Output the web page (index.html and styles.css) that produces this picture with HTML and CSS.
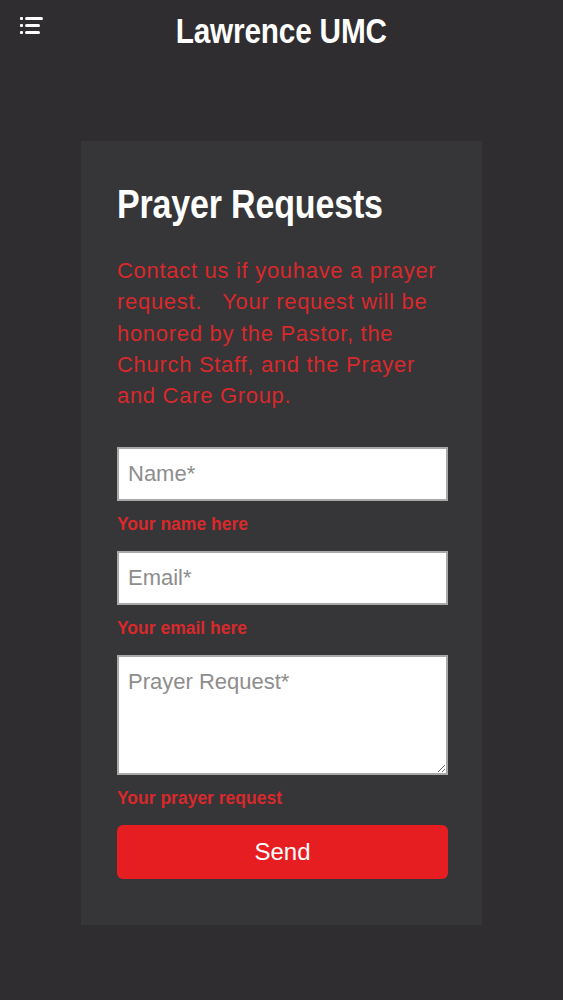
FILE: index.html
```html
<!DOCTYPE html>
<html lang="en">
<head>
    <meta charset="UTF-8">
    <meta name="viewport" content="width=device-width, initial-scale=1.0">
    <title>Lawrence UMC - Prayer Requests</title>
    <link rel="stylesheet" href="styles.css">
</head>
<body>
    <header class="topbar">
        <button class="menu-btn" aria-label="Menu">
            <svg width="24" height="20" viewBox="0 0 24 20">
                <rect x="0" y="1" width="3" height="3" rx="1" fill="#fff"/>
                <rect x="0" y="8" width="3" height="3" rx="1" fill="#fff"/>
                <rect x="0" y="15" width="3" height="3" rx="1" fill="#fff"/>
                <rect x="5" y="1" width="18" height="3" rx="1.5" fill="#fff"/>
                <rect x="5" y="8" width="15" height="3" rx="1.5" fill="#fff"/>
                <rect x="5" y="15" width="15" height="3" rx="1.5" fill="#fff"/>
            </svg>
        </button>
        <h1 class="site-title">Lawrence UMC</h1>
    </header>

    <main class="card">
        <h2 class="card-title">Prayer Requests</h2>
        <p class="intro">Contact us if youhave a prayer request.&nbsp;&nbsp; Your request will be honored by the Pastor, the Church Staff, and the Prayer and Care Group.</p>

        <form class="prayer-form">
            <div class="field">
                <input type="text" placeholder="Name*">
                <span class="hint">Your name here</span>
            </div>
            <div class="field">
                <input type="email" placeholder="Email*">
                <span class="hint">Your email here</span>
            </div>
            <div class="field">
                <textarea placeholder="Prayer Request*"></textarea>
                <span class="hint">Your prayer request</span>
            </div>
            <button type="submit" class="send-btn">Send</button>
        </form>
    </main>
</body>
</html>
```

FILE: styles.css
```css
/* Page */
body {
    margin: 0;
    background-color: #2f2d30;
    font-family: "Liberation Sans", Arial, sans-serif;
    color: #fff;
}

/* Top bar */
.topbar {
    position: relative;
    height: 62px;
    display: flex;
    justify-content: center;
    align-items: center;
}

.menu-btn {
    position: absolute;
    left: 20px;
    top: 16px;
    padding: 0;
    background: none;
    border: none;
    line-height: 0;
}

/* condensed bold look: no narrow face installed, so squeeze the bold */
.site-title {
    margin: 0;
    font-weight: bold;
    font-size: 35px;
    line-height: 40px;
    letter-spacing: -0.2px;
    transform: scaleX(0.85);
}

/* Card */
.card {
    width: 401px;
    margin: 79px auto 0;
    background-color: #363537;
    padding: 40px 34px 46px 36px;
    box-sizing: border-box;
}

.card-title {
    margin: 0 0 28px;
    font-weight: bold;
    font-size: 40px;
    line-height: 46px;
    letter-spacing: -0.2px;
    transform: scaleX(0.85);
    transform-origin: left center;
    white-space: nowrap;
}

.intro {
    margin: 0 0 36px;
    color: #d8292c;
    font-size: 22px;
    line-height: 31.25px;
    letter-spacing: 0.7px;
}

/* Form */
.prayer-form {
    display: flex;
    flex-direction: column;
}

.field {
    display: flex;
    flex-direction: column;
    margin-bottom: 17px;
}

input, textarea {
    font-family: "Liberation Sans", Arial, sans-serif;
    font-size: 22px;
    color: #333;
    background: #fff;
    border: 2px solid #a9a9a9;
    border-radius: 0;
    padding: 0 9px;
    box-sizing: border-box;
    width: 100%;
    margin: 0;
}

input {
    height: 54px;
}

textarea {
    height: 120px;
    padding-top: 12px;
    resize: vertical;
}

input::placeholder, textarea::placeholder {
    color: #8d8d8d;
}

.hint {
    margin-top: 13px;
    color: #d8292c;
    font-size: 17.5px;
    font-weight: bold;
    line-height: 20px;
}

.send-btn {
    height: 54px;
    background-color: #e61e22;
    color: #fff;
    border: none;
    border-radius: 6px;
    font-family: "Liberation Sans", Arial, sans-serif;
    font-size: 24px;
}
```
